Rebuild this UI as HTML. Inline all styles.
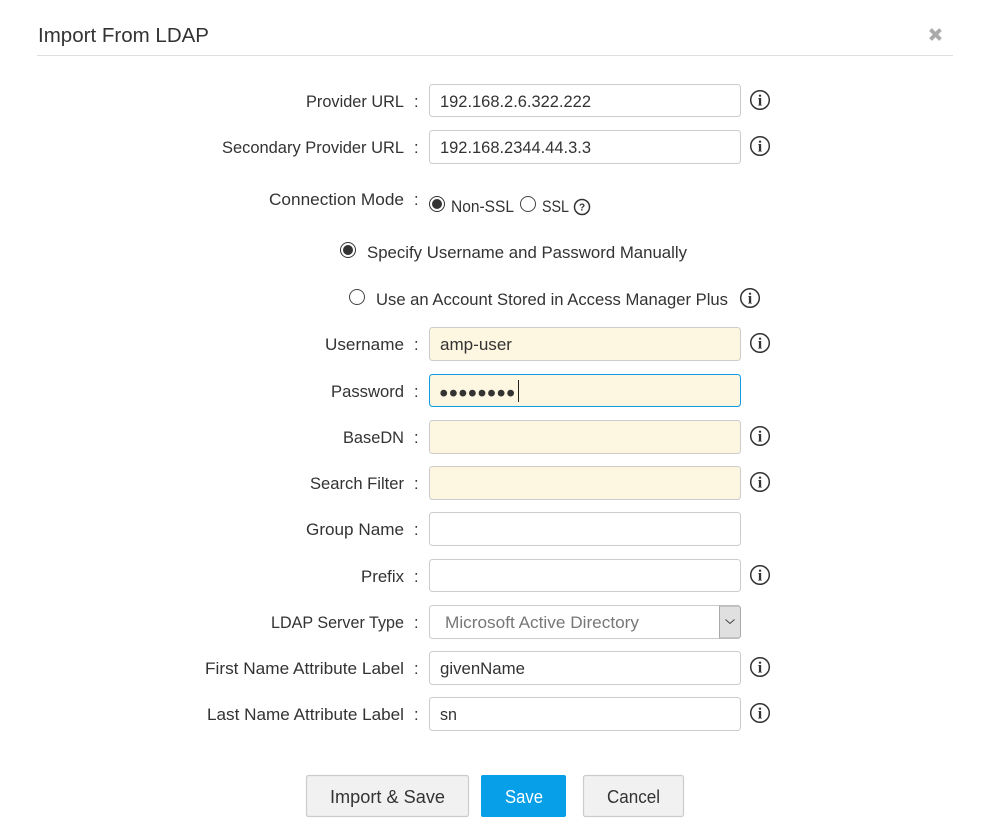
<!DOCTYPE html>
<html><head><meta charset="utf-8"><title>Import From LDAP</title>
<style>
html,body{margin:0;padding:0;background:#fff;width:991px;height:836px;overflow:hidden}
svg{display:block;position:absolute;left:0;top:0}
text{font-family:"Liberation Sans",sans-serif;font-size:16.5px;fill:#333}
.f{fill:#fff;stroke:#ccc;stroke-width:1}
.y{fill:#fdf6e0;stroke:#ccc;stroke-width:1}
.ic{fill:#fff;stroke:#333;stroke-width:1.5}
.i{font-family:"Liberation Serif",serif;font-weight:bold;font-size:16px;text-anchor:middle}
.b{fill:#f1f1f1;stroke:#ccc;stroke-width:1.2}
.t{font-size:18.5px}
</style></head><body>
<svg width="991" height="836" viewBox="0 0 991 836" xmlns="http://www.w3.org/2000/svg">
<text x="38" y="42" textLength="171" lengthAdjust="spacingAndGlyphs" style="font-size:20px">Import From LDAP</text>
<rect x="37" y="55" width="916" height="1" fill="#dfdfdf"/>
<path d="M930.500 29.500L940.500 39.500M940.500 29.500L930.500 39.500" stroke="#aaa" stroke-width="3.800" fill="none"/>

<text x="306" y="107" textLength="98" lengthAdjust="spacingAndGlyphs">Provider URL</text><text x="414" y="107">:</text>
<text x="222" y="153" textLength="182" lengthAdjust="spacingAndGlyphs">Secondary Provider URL</text><text x="414" y="153">:</text>
<text x="269" y="205" textLength="135" lengthAdjust="spacingAndGlyphs">Connection Mode</text><text x="414" y="205">:</text>
<text x="325" y="350" textLength="79" lengthAdjust="spacingAndGlyphs">Username</text><text x="414" y="350">:</text>
<text x="331" y="397" textLength="73" lengthAdjust="spacingAndGlyphs">Password</text><text x="414" y="397">:</text>
<text x="343" y="443" textLength="61" lengthAdjust="spacingAndGlyphs">BaseDN</text><text x="414" y="443">:</text>
<text x="310" y="489" textLength="94" lengthAdjust="spacingAndGlyphs">Search Filter</text><text x="414" y="489">:</text>
<text x="306" y="535" textLength="98" lengthAdjust="spacingAndGlyphs">Group Name</text><text x="414" y="535">:</text>
<text x="361" y="582" textLength="43" lengthAdjust="spacingAndGlyphs">Prefix</text><text x="414" y="582">:</text>
<text x="271" y="628" textLength="133" lengthAdjust="spacingAndGlyphs">LDAP Server Type</text><text x="414" y="628">:</text>
<text x="205" y="674" textLength="199" lengthAdjust="spacingAndGlyphs">First Name Attribute Label</text><text x="414" y="674">:</text>
<text x="207" y="720" textLength="197" lengthAdjust="spacingAndGlyphs">Last Name Attribute Label</text><text x="414" y="720">:</text>

<rect class="f" x="429.500" y="84.500" width="311" height="32" rx="3"/>
<rect class="f" x="429.500" y="130.500" width="311" height="33" rx="3"/>
<rect class="y" x="429.500" y="327.500" width="311" height="33" rx="3"/>
<rect x="429.500" y="374.500" width="311" height="32" rx="3" fill="#fdf6e0" stroke="#0e9be2"/>
<rect class="y" x="429.500" y="420.500" width="311" height="33" rx="3"/>
<rect class="y" x="429.500" y="466.500" width="311" height="33" rx="3"/>
<rect class="f" x="429.500" y="512.500" width="311" height="33" rx="3"/>
<rect class="f" x="429.500" y="559.500" width="311" height="32" rx="3"/>
<rect class="f" x="429.500" y="605.500" width="311" height="33" rx="3"/>
<rect class="f" x="429.500" y="651.500" width="311" height="33" rx="3"/>
<rect class="f" x="429.500" y="697.500" width="311" height="33" rx="3"/>

<text x="440" y="107" textLength="151" lengthAdjust="spacingAndGlyphs">192.168.2.6.322.222</text>
<text x="440" y="153" textLength="151" lengthAdjust="spacingAndGlyphs">192.168.2344.44.3.3</text>
<text x="440" y="350" textLength="72" lengthAdjust="spacingAndGlyphs">amp-user</text>
<text x="439.400" y="401.500" letter-spacing="0.800" style="font-size:25px">••••••••</text>
<rect x="518" y="380" width="1" height="22" fill="#222"/>
<text x="445" y="628" textLength="194" lengthAdjust="spacingAndGlyphs" style="fill:#777">Microsoft Active Directory</text>
<text x="440" y="674" textLength="85" lengthAdjust="spacingAndGlyphs">givenName</text>
<text x="440" y="720" textLength="17" lengthAdjust="spacingAndGlyphs">sn</text>

<path d="M719.500 606H738a2.500 2.500 0 0 1 2.500 2.500V635.500a2.500 2.500 0 0 1-2.500 2.500H719.500Z" fill="#e0e0e0" stroke="#aaa"/>
<path d="M725.500 619.500L730 623.500L734.500 619.500" fill="none" stroke="#444" stroke-width="1"/>

<circle cx="437" cy="204" r="7.500" fill="#fff" stroke="#333" stroke-width="1"/><circle cx="437" cy="204" r="5" fill="#333"/>
<text x="451" y="212" textLength="63" lengthAdjust="spacingAndGlyphs">Non-SSL</text>
<circle cx="528" cy="204" r="7.500" fill="#fff" stroke="#444" stroke-width="1"/>
<text x="542" y="212" textLength="27" lengthAdjust="spacingAndGlyphs">SSL</text>
<circle cx="582" cy="207" r="7.500" fill="#fff" stroke="#333" stroke-width="1.500"/>
<text x="582" y="210.500" text-anchor="middle" style="font-size:10px;font-weight:bold">?</text>

<circle cx="348" cy="250" r="7.500" fill="#fff" stroke="#333" stroke-width="1"/><circle cx="348" cy="250" r="5" fill="#333"/>
<text x="367" y="258" textLength="320" lengthAdjust="spacingAndGlyphs">Specify Username and Password Manually</text>
<circle cx="357" cy="297" r="7.500" fill="#fff" stroke="#444" stroke-width="1"/>
<text x="376" y="305" textLength="352" lengthAdjust="spacingAndGlyphs">Use an Account Stored in Access Manager Plus</text>

<circle class="ic" cx="760" cy="100" r="9.300"/><text class="i" x="760" y="105.500">i</text>
<circle class="ic" cx="760" cy="146" r="9.300"/><text class="i" x="760" y="151.500">i</text>
<circle class="ic" cx="750" cy="298" r="9.300"/><text class="i" x="750" y="303.500">i</text>
<circle class="ic" cx="760" cy="343" r="9.300"/><text class="i" x="760" y="348.500">i</text>
<circle class="ic" cx="760" cy="436" r="9.300"/><text class="i" x="760" y="441.500">i</text>
<circle class="ic" cx="760" cy="482" r="9.300"/><text class="i" x="760" y="487.500">i</text>
<circle class="ic" cx="760" cy="575" r="9.300"/><text class="i" x="760" y="580.500">i</text>
<circle class="ic" cx="760" cy="667" r="9.300"/><text class="i" x="760" y="672.500">i</text>
<circle class="ic" cx="760" cy="713" r="9.300"/><text class="i" x="760" y="718.500">i</text>

<rect class="b" x="306.500" y="775.500" width="162" height="41" rx="2"/>
<text class="t" x="330" y="803" textLength="115" lengthAdjust="spacingAndGlyphs">Import &amp; Save</text>
<rect x="481" y="775" width="85" height="42" rx="2" fill="#069fe8"/>
<text class="t" x="505" y="803" textLength="38" lengthAdjust="spacingAndGlyphs" style="fill:#fff">Save</text>
<rect class="b" x="583.500" y="775.500" width="100" height="41" rx="2"/>
<text class="t" x="607" y="803" textLength="53" lengthAdjust="spacingAndGlyphs">Cancel</text>
</svg>
</body></html>
